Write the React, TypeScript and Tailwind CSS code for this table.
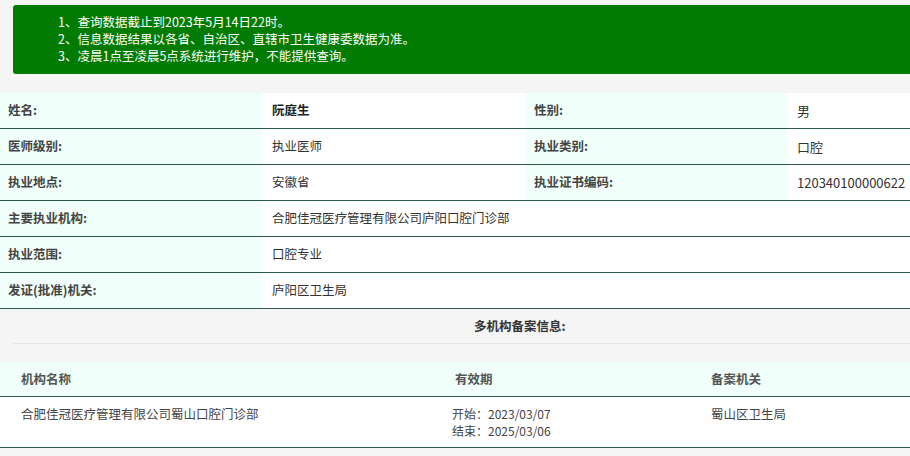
const notices = [
  "1、查询数据截止到2023年5月14日22时。",
  "2、信息数据结果以各省、自治区、直辖市卫生健康委数据为准。",
  "3、凌晨1点至凌晨5点系统进行维护，不能提供查询。",
];

const pairRows = [
  { a: "姓名:", b: "阮庭生", bold: true, c: "性别:", d: "男" },
  { a: "医师级别:", b: "执业医师", c: "执业类别:", d: "口腔" },
  { a: "执业地点:", b: "安徽省", c: "执业证书编码:", d: "120340100000622" },
];

const wideRows = [
  { a: "主要执业机构:", b: "合肥佳冠医疗管理有限公司庐阳口腔门诊部" },
  { a: "执业范围:", b: "口腔专业" },
  { a: "发证(批准)机关:", b: "庐阳区卫生局" },
];

export default function App() {
  return (
    <div className="w-[910px] h-[456px] overflow-hidden bg-[#f5f5f5] font-['Noto_Sans_CJK_SC','Microsoft_YaHei',sans-serif] text-[12.5px] text-[#333]">
      <div className="w-[1100px]">
        {/* Notice banner */}
        <div className="pt-[5px] pl-[13px]">
          <div className="h-[69px] rounded-l-[3px] bg-[#017b01] pl-[45px] pt-[8px] text-white leading-[17px]">
            {notices.map((n) => (
              <div key={n}>{n}</div>
            ))}
          </div>
        </div>

        {/* Doctor info */}
        <div className="mt-[19px]">
          {pairRows.map((r) => (
            <div key={r.a} className="flex h-[36px] items-center border-b border-[#2b5849]">
              <div className="flex h-full w-[262px] items-center bg-[#f0fff9] pl-[8px] font-semibold text-[#444]">
                {r.a}
              </div>
              <div
                className={`flex h-full w-[264px] items-center bg-white pl-[10px] ${r.bold ? "font-bold text-[#222]" : ""}`}
              >
                {r.b}
              </div>
              <div className="flex h-full w-[262px] items-center bg-[#f0fff9] pl-[8px] font-semibold text-[#444]">
                {r.c}
              </div>
              <div className="flex h-full flex-1 items-center whitespace-nowrap bg-white pl-[9px] text-[13px]">
                {r.d}
              </div>
            </div>
          ))}
          {wideRows.map((r) => (
            <div key={r.a} className="flex h-[36px] items-center border-b border-[#2b5849]">
              <div className="flex h-full w-[262px] items-center bg-[#f0fff9] pl-[8px] font-semibold text-[#444]">
                {r.a}
              </div>
              <div className="flex h-full flex-1 items-center bg-white pl-[10px]">{r.b}</div>
            </div>
          ))}
        </div>

        {/* Multi-institution records */}
        <div className="ml-[13px] flex h-[35px] items-center border-b border-[#e6e6e6] pl-[461px] font-bold text-[#333]">
          多机构备案信息:
        </div>
        <div className="mt-[18px]">
          <div className="flex h-[35px] items-center border-b border-[#2b5849] bg-[#f0fff9] font-semibold text-[#555]">
            <div className="w-[434px] pl-[21px]">机构名称</div>
            <div className="w-[256px] pl-[21px]">有效期</div>
            <div className="flex-1 pl-[21px]">备案机关</div>
          </div>
          <div className="flex h-[51px] border-b border-[#2b5849] bg-white pt-[8px] leading-[17px] text-[#444]">
            <div className="w-[434px] pl-[21px]">合肥佳冠医疗管理有限公司蜀山口腔门诊部</div>
            <div className="w-[256px] pl-[18px] text-[12px]">
              <div>开始：2023/03/07</div>
              <div>结束：2025/03/06</div>
            </div>
            <div className="flex-1 pl-[21px]">蜀山区卫生局</div>
          </div>
        </div>
      </div>
    </div>
  );
}
